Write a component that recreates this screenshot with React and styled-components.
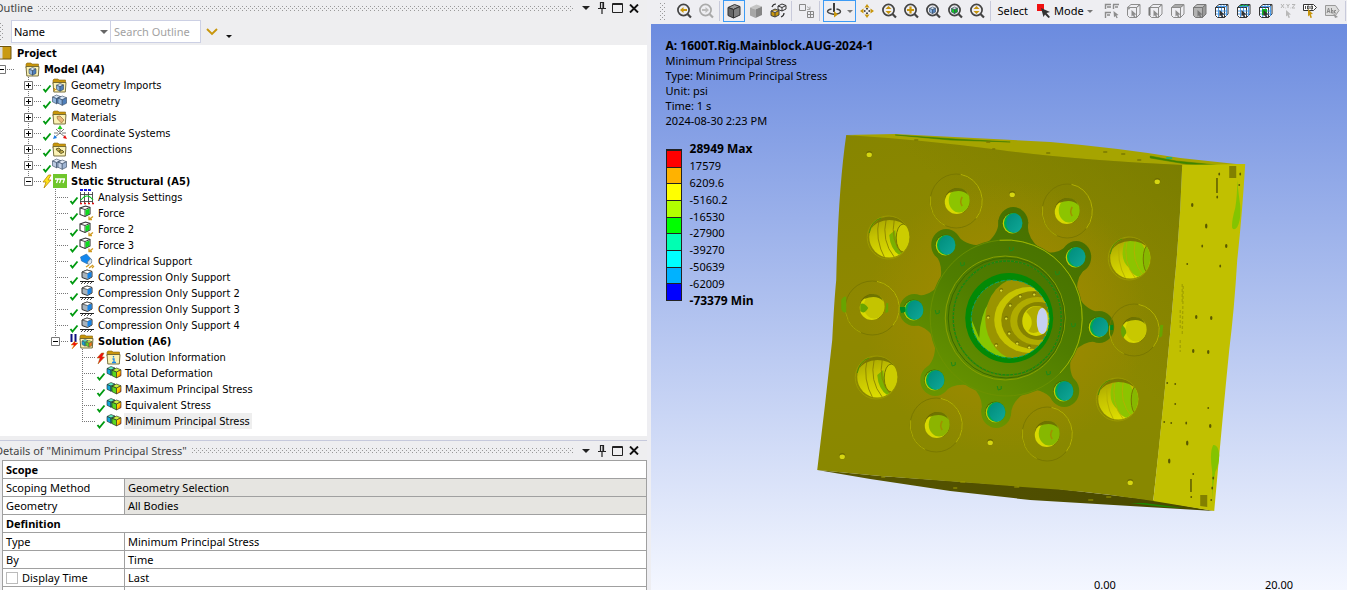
import React from "react";
import styled, { createGlobalStyle, css } from "styled-components";

const uiFont = '"Noto Sans", "Open Sans", sans-serif';
const treeFont = '"DejaVu Sans Condensed", "DejaVu Sans", sans-serif';

const GlobalStyle = createGlobalStyle`
  * { box-sizing: border-box; }
  body { margin: 0; background: #eeeef2; color: #000; font: 11px/16px ${uiFont}; overflow: hidden; }
  button, input, select { font: inherit; color: inherit; }
  svg { display: block; }
`;

const dotPattern = css`
  background-image:
    conic-gradient(from 270deg at 1px 1px, #999 90deg, transparent 0),
    conic-gradient(from 270deg at 1px 1px, #999 90deg, transparent 0);
  background-size: 4px 4px;
  background-position: 0 0, 2px 2px;
`;

const Workbench = styled.main`
  display: flex;
  height: 100vh;
`;

const SidePane = styled.div`
  flex: 0 0 48%;
  display: flex;
  flex-direction: column;
  min-width: 0;
  margin-right: 4px;
  overflow: hidden;
`;

const Panel = styled.section`
  display: flex;
  flex-direction: column;
  background: #eeeef0;
  ${(p) => p.$fill && "flex: 1 1 0; min-height: 0; overflow: hidden;"}
`;

const PanelHeader = styled.header`
  display: flex;
  flex: none;
  align-items: center;
  gap: 5px;
  height: ${(p) => (p.$ruled ? 20 : 16)}px;
  padding-right: 5px;
  border-top: ${(p) => (p.$ruled ? "1px solid #c6c9dc" : "0")};
`;

const PanelTitle = styled.h2`
  margin: 0 0 0 -5px;
  font-size: 11px;
  font-weight: 400;
  color: #444;
  white-space: nowrap;
`;

const DragArea = styled.div`
  flex: 1;
  height: 5px;
  ${dotPattern}
`;

const WindowButtons = styled.div`
  display: flex;
`;

const PlainButton = styled.button`
  display: grid;
  place-items: center;
  padding: 0;
  border: 0;
  background: none;
`;

const WindowButton = styled(PlainButton)`
  width: 16px;
  height: 16px;
`;

const FilterBar = styled.div`
  display: flex;
  align-items: center;
  height: 29px;
  padding: 2px 0 0;
`;

const Grip = styled.span`
  flex: none;
  width: ${(p) => p.$size}px;
  height: 17px;
  ${dotPattern}
`;

const SelectBox = styled.label`
  position: relative;
  margin-left: 7px;
`;

const FilterSelect = styled.select`
  appearance: none;
  display: block;
  width: 100px;
  height: 23px;
  padding: 0 2px;
  border: 1px solid #ccd0e4;
  background: #fff;
  outline: 0;
`;

const SelectArrow = styled.span`
  position: absolute;
  right: 3px;
  top: 10px;
  pointer-events: none;
`;

const SearchInput = styled.input`
  width: 90px;
  height: 23px;
  padding: 0 3px;
  border: 1px solid #ccd0e4;
  border-left: 0;
  background: #fff;
  outline: 0;
  &::placeholder { color: #a2a2a2; opacity: 1; }
`;

const ExpandButton = styled(PlainButton)`
  width: 22px;
  height: 20px;
`;

const OverflowButton = styled(PlainButton)`
  width: 12px;
  height: 12px;
  align-items: end;
`;

const Tree = styled.ul`
  margin: 0 0 4px;
  padding: 0 0 7px;
  list-style: none;
  background: #fff;
  font: 11px/18px ${treeFont};
`;

const TreeRow = styled.li`
  display: flex;
  height: 16px;
  margin-left: -12px;
  white-space: nowrap;
`;

const vDots = "repeating-linear-gradient(#777 0 1px, transparent 1px 2px)";
const hDots = "repeating-linear-gradient(90deg, #777 0 1px, transparent 1px 2px)";

const Guide = styled.span`
  flex: none;
  width: 27px;
  padding: 4px 0 0 9px;
  background-repeat: no-repeat;
  background-position: 13px 0, 13px 8px;
  background-image: ${vDots}, ${hDots};
  background-size: 1px ${(p) => ({ full: "16px", half: "8px" }[p.$down] || "0")}, ${(p) => (p.$across ? "14px 1px" : "0 0")};
`;

const Toggle = styled(PlainButton)`
  width: 9px;
  height: 9px;
  background: #fff;
`;

const Status = styled.span`
  flex: none;
  width: 10px;
`;

const NodeIcon = styled.span`
  flex: none;
  width: 16px;
`;

const NodeLabel = styled.span`
  height: 16px;
  margin-left: 2px;
  padding: 0 2px 0 1px;
  font-weight: ${(p) => (p.$bold ? 700 : 400)};
  background: ${(p) => (p.$selected ? "#eeeeee" : "none")};
`;

const DetailsTable = styled.table`
  width: calc(100% - 2px);
  margin-left: 2px;
  border-collapse: collapse;
  table-layout: fixed;
  background: #fff;
`;

const detailCell = css`
  height: 18px;
  padding: 0 3px;
  border: 1px solid #a0a0a0;
  line-height: 17px;
  text-align: left;
`;

const GroupCell = styled.th`
  ${detailCell}
  font-weight: 700;
`;

const NameCell = styled.th`
  ${detailCell}
  font-weight: 400;
`;

const ValueCell = styled.td`
  ${detailCell}
  background: ${(p) => (p.$muted ? "#e6e5e1" : "#fff")};
`;

const CheckLabel = styled.label`
  display: flex;
  align-items: center;
  gap: 4px;
`;

const CheckBox = styled.input`
  appearance: none;
  width: 12px;
  height: 12px;
  margin: 0;
  border: 1px solid #bbb;
  background: #fff;
`;

const MainPane = styled.div`
  flex: 1;
  min-width: 0;
  display: flex;
  flex-direction: column;
`;

const ToolBar = styled.div`
  display: flex;
  align-items: center;
  flex: none;
  height: 24px;
  padding: 0 0 2px 9px;
  overflow: hidden;
  white-space: nowrap;
`;

const ToolGroup = styled.div`
  display: flex;
  flex: none;
  margin-left: ${(p) => p.$gap || 0}px;
`;

const ToolFrame = styled.div`
  display: flex;
  flex: none;
  outline: ${(p) => (p.$active ? "1px solid #3d9bf5" : "0")};
  outline-offset: -1px;
`;

const ToolButton = styled(PlainButton)`
  flex: none;
  width: ${(p) => p.$width || 22}px;
  height: 22px;
`;

const Divider = styled.span`
  flex: none;
  width: 6px;
  height: 20px;
  background: linear-gradient(#c8cadb, #c8cadb) 2px 0 / 1px 100% no-repeat;
`;

const TextTool = styled(PlainButton)`
  display: flex;
  align-items: center;
  gap: 3px;
  height: 22px;
  margin-left: ${(p) => p.$gap}px;
`;

const Scene = styled.section`
  position: relative;
  flex: 1;
  min-height: 0;
  display: flex;
  flex-direction: column;
  padding: 14px 0 0 15px;
  overflow: hidden;
  background: linear-gradient(#6b8bdf, #f4f7ff);
`;

const ModelDrawing = styled.svg`
  position: absolute;
  inset: 0;
  width: 100%;
  height: 100%;
`;

const Caption = styled.div`
  position: relative;
  font-size: 11px;
  line-height: 15px;
`;

const CaptionLine = styled.p`
  margin: 0;
`;

const CaptionTitle = styled.h1`
  margin: 0;
  font-size: 12px;
  line-height: 15px;
`;

const Legend = styled.div`
  position: relative;
  display: flex;
  gap: 8px;
  height: 168px;
  margin-top: 13px;
`;

const ColorBar = styled.div`
  display: flex;
  flex-direction: column;
  width: 16px;
  margin: 8px 0;
  border: 1px solid #222;
  border-width: 2px 1px 1px;
`;

const Band = styled.span`
  flex: 1;
  background: ${(p) => p.$color};
  & + & { border-top: 1px solid #222; }
`;

const LegendLabels = styled.ol`
  display: flex;
  flex-direction: column;
  margin: 0;
  padding: 0;
  list-style: none;
`;

const LegendLabel = styled.li`
  flex: 1;
  display: flex;
  align-items: center;
  font-size: ${(p) => (p.$bold ? 12 : 11)}px;
  font-weight: ${(p) => (p.$bold ? 700 : 400)};
`;

const ScaleRow = styled.div`
  position: relative;
  display: flex;
  justify-content: flex-end;
  gap: 149px;
  margin-top: auto;
  padding-right: 54px;
  line-height: 11px;
`;

/* ---------- small glyphs ---------- */

const Caret = ({ w = 8, color = "#333" }) => (
  <svg width={w} height={w / 2} viewBox="0 0 8 4"><path d="M0 0h8L4 4z" fill={color} /></svg>
);

const Svg16 = ({ children }) => <svg width="16" height="16" viewBox="0 0 16 16">{children}</svg>;

const Folder = ({ children }) => (
  <Svg16>
    <path d="M1 3.500V3l1-1h4l1 1h6.500v4H1z" fill="#c8960c" stroke="#8a6a10" strokeWidth=".6" />
    <path d="M1 5.500h13L13.300 15H1.800z" fill="#fbf2b4" stroke="#6b6230" strokeWidth=".9" />
    {children}
  </Svg16>
);

const MiniCube = ({ x = 0, y = 0, s = 1, top = "#d5e4f5", left = "#8fb4de", right = "#4f80bc", line = "#33475f" }) => (
  <g transform={`translate(${x} ${y}) scale(${s})`} stroke={line} strokeWidth={0.6 / s} strokeLinejoin="round">
    <path d="M0 2.500L5 0l5 2-5 2.500z" fill={top} />
    <path d="M0 2.500l5 2V11L0 8.500z" fill={left} />
    <path d="M5 4.500L10 2v6.500L5 11z" fill={right} />
  </g>
);

const TwinCubes = ({ a, b }) => (
  <Svg16>
    <MiniCube x={0.5} y={2} s={0.8} {...a} />
    <MiniCube x={6} y={3} s={0.85} {...b} />
  </Svg16>
);

const ForceIcon = () => (
  <Svg16>
    <path d="M1 3L6.500 1 11 2.500V9L6 11.500 1 9.500z" fill="#fff" stroke="#333" strokeWidth="1.100" />
    <path d="M1 3l5 1.500L11 2.500M6 4.500v7" fill="none" stroke="#444" />
    <path d="M6.500 5L10.500 3.500v5.200l-4 2z" fill="#0bdc1c" />
    <path d="M14 11.500l-4 3m0-3v3h3" fill="none" stroke="#d09a20" strokeWidth="1.300" />
  </Svg16>
);

const SupportIcon = () => (
  <Svg16>
    <path d="M3 3l5-2 5 1.500V8l-4.500 2.500L3 8.500z" fill="#a9b3bc" stroke="#333" strokeWidth="1" />
    <path d="M3 3l5-2 5 1.500-4.500 2z" fill="#fff" stroke="#444" strokeWidth=".8" />
    <path d="M8.500 4.500L12.500 3v4.800l-4 2.200z" fill="#1583e8" />
    <path d="M1 12.500h14" stroke="#222" strokeWidth="1" />
    <path d="M2 15l2-2m1 2l2-2m1 2l2-2m1 2l2-2" stroke="#333" strokeWidth=".9" fill="none" />
  </Svg16>
);

const ResultIcon = () => (
  <Svg16>
    <defs>
      <linearGradient id="hot" x1="0" x2="1" y1="0" y2="1">
        <stop offset="0" stopColor="#e8ff00" /><stop offset=".5" stopColor="#ffc400" /><stop offset="1" stopColor="#f01808" />
      </linearGradient>
    </defs>
    <MiniCube x={1} y={1.500} s={0.8} top="#5ff0c0" left="#12a6d8" right="#28c878" line="#222" />
    <MiniCube x={6} y={3} s={0.9} top="#c8f040" left="#58d820" right="url(#hot)" line="#222" />
  </Svg16>
);

const ICONS = {
  project: (
    <Svg16><path d="M1 1.500h12v12.500H1z" fill="#c99a12" stroke="#6e5512" /><path d="M2 2h2.500v11.500H2z" fill="#ddd" /></Svg16>
  ),
  model: <Folder><MiniCube x={4} y={6.500} s={0.7} /></Folder>,
  imports: <Folder><MiniCube x={4.500} y={6.500} s={0.7} /><path d="M2.500 11v3m-1-1.500h3" stroke="#d09a20" /></Folder>,
  geometry: <TwinCubes />,
  materials: <Folder><path d="M5 7.500l3-.5 4 4-2.500 3-4-4z" fill="#e9b87c" stroke="#98703c" strokeWidth=".7" /></Folder>,
  coords: (
    <Svg16>
      <path d="M8 9V2M8 8l5 4M8 8l-5 4M4 4l3 3m2 0l3-3M2 8h4m4 0h4" stroke="#555" strokeWidth=".8" />
      <path d="M8 0l2.500 4h-5z" fill="#1bd01b" /><path d="M15 14l-4-1 2-3z" fill="#e81010" /><path d="M1 14l1.500-4 2.500 3z" fill="#1c7ee8" />
    </Svg16>
  ),
  connections: <Folder><path d="M4 8l3-1 2 2-3 1.500zM7 11l3-2 2 2-3 1.500z" fill="#c7b24c" stroke="#5d5520" strokeWidth=".9" /></Folder>,
  mesh: <TwinCubes a={{ top: "#e0e8f4", left: "#bccbe2", right: "#9fb5d4" }} b={{ top: "#e0e8f4", left: "#c4d2e8", right: "#9fb5d4" }} />,
  structural: (
    <Svg16>
      <path d="M1 1h14v14H1z" fill="#70c62c" />
      <path d="M3 6h10M6 6l-1.500 4M9 6l-1.500 4M12.500 6L11 10" stroke="#fff" strokeWidth="1.300" />
    </Svg16>
  ),
  settings: (
    <Svg16>
      <path d="M1.500 3v11M5.500 3v11M9.500 3v11M13.500 3v11M1 5.500h13M1 12.500h13" stroke="#444" strokeWidth=".9" />
      <path d="M2 11Q8 3 14 11" stroke="#00c818" strokeWidth="1.200" fill="none" />
      <path d="M1 1h3M5 1h3M9 1h3" stroke="#1818e0" strokeWidth="2" /><path d="M1 14.500h2M5 14.500h2M9 14.500h2M13 14.500h2" stroke="#e01010" strokeWidth="1.500" />
    </Svg16>
  ),
  force: <ForceIcon />,
  cylinder: (
    <Svg16>
      <path d="M1.500 4L7.500 1l5 5.500-4 4.500L2.500 8z" fill="#1387ee" stroke="#2a6aa8" strokeWidth=".6" />
      <path d="M11.500 5.500q2 2 1 4.500l-2.500 1.500q-2-.5-1.500-2.500z" fill="#d9e6f2" stroke="#567" strokeWidth=".6" />
      <path d="M7 14l3-2m0 3l4-3m-1 3l2-2" stroke="#d09a20" strokeWidth="1.200" />
    </Svg16>
  ),
  support: <SupportIcon />,
  solution: (
    <Folder>
      <MiniCube x={3} y={6.500} s={0.6} top="#5ff0c0" left="#12a6d8" right="#28c878" line="#456" />
      <MiniCube x={7} y={7.500} s={0.6} top="#c8f040" left="#68d820" right="#f07818" line="#564" />
    </Folder>
  ),
  info: <Folder><path d="M7.500 7v1.500M6.500 10h1.500v3M6 13.500h4" stroke="#1c86e8" strokeWidth="1.300" fill="none" /></Folder>,
  result: <ResultIcon />,
};

const STATUS = {
  ok: <path d="M1.500 12l2 2.500 5-6" stroke="#009a10" strokeWidth="1.900" fill="none" />,
  stale: <path d="M6.500 2L1 9h3l-2 6 7-8H6l3-5z" fill="#ffe21c" stroke="#b88a08" strokeWidth=".8" />,
  failed: <path d="M5.500 4L1 9h3l-2 6 6.500-7H6l2-4z" fill="#f01010" stroke="#a06a08" strokeWidth=".5" />,
  paused: (
    <g>
      <path d="M2.500 1v8M6.500 1v8" stroke="#101080" strokeWidth="2" />
      <path d="M6 8l-4 4h3l-2 4 6-6H6z" fill="#f01010" stroke="#d89a08" strokeWidth=".5" />
    </g>
  ),
};

/* ---------- outline data ---------- */

const NODES = [
  { label: "Project", icon: "project", depth: 0, bold: true },
  { label: "Model (A4)", icon: "model", depth: 1, bold: true, open: true, line: "none" },
  { label: "Geometry Imports", icon: "imports", depth: 2, status: "ok", open: false },
  { label: "Geometry", icon: "geometry", depth: 2, status: "ok", open: false },
  { label: "Materials", icon: "materials", depth: 2, status: "ok", open: false },
  { label: "Coordinate Systems", icon: "coords", depth: 2, status: "ok", open: false },
  { label: "Connections", icon: "connections", depth: 2, status: "ok", open: false },
  { label: "Mesh", icon: "mesh", depth: 2, status: "ok", open: false },
  { label: "Static Structural (A5)", icon: "structural", depth: 2, status: "stale", bold: true, open: true, line: "half" },
  { label: "Analysis Settings", icon: "settings", depth: 3, status: "ok" },
  { label: "Force", icon: "force", depth: 3, status: "ok" },
  { label: "Force 2", icon: "force", depth: 3, status: "ok" },
  { label: "Force 3", icon: "force", depth: 3, status: "ok" },
  { label: "Cylindrical Support", icon: "cylinder", depth: 3, status: "ok" },
  { label: "Compression Only Support", icon: "support", depth: 3, status: "ok" },
  { label: "Compression Only Support 2", icon: "support", depth: 3, status: "ok" },
  { label: "Compression Only Support 3", icon: "support", depth: 3, status: "ok" },
  { label: "Compression Only Support 4", icon: "support", depth: 3, status: "ok" },
  { label: "Solution (A6)", icon: "solution", depth: 3, status: "paused", bold: true, open: true, line: "half" },
  { label: "Solution Information", icon: "info", depth: 4, status: "failed" },
  { label: "Total Deformation", icon: "result", depth: 4, status: "ok" },
  { label: "Maximum Principal Stress", icon: "result", depth: 4, status: "ok" },
  { label: "Equivalent Stress", icon: "result", depth: 4, status: "ok" },
  { label: "Minimum Principal Stress", icon: "result", depth: 4, status: "ok", line: "half", selected: true },
];

function OutlineNode({ node }) {
  const parents = Math.max(node.depth - 1, 0);
  return (
    <TreeRow>
      {Array.from({ length: parents }, (_, i) => <Guide key={i} />)}
      {node.depth > 0 && (
        <Guide $down={node.line || "full"} $across>
          {node.open !== undefined && (
            <Toggle aria-label={`${node.open ? "Collapse" : "Expand"} ${node.label}`}>
              <svg width="9" height="9" viewBox="0 0 9 9">
                <path d="M.5.5h8v8h-8z" fill="#fff" stroke="#777" />
                <path d={node.open ? "M2 4.500h5" : "M2 4.500h5M4.500 2v5"} stroke="#000" />
              </svg>
            </Toggle>
          )}
        </Guide>
      )}
      <Status>{node.status && <svg width="10" height="16" viewBox="0 0 10 16">{STATUS[node.status]}</svg>}</Status>
      <NodeIcon>{ICONS[node.icon]}</NodeIcon>
      <NodeLabel $bold={node.bold} $selected={node.selected}>{node.label}</NodeLabel>
    </TreeRow>
  );
}

const PanelControls = () => (
  <WindowButtons>
    <WindowButton aria-label="Options"><Caret color="#222" /></WindowButton>
    <WindowButton aria-label="Pin">
      <svg width="10" height="12" viewBox="0 0 10 12"><path d="M3.500.5h3v6h-3zM6 1v5M1 6.500h8M5 7v5" fill="none" stroke="#222" strokeWidth="1.200" /></svg>
    </WindowButton>
    <WindowButton aria-label="Maximize">
      <svg width="12" height="10" viewBox="0 0 12 10"><path d="M.5.5h10v9H.5zM.5 1.500h10" fill="none" stroke="#222" strokeWidth="1" /></svg>
    </WindowButton>
    <WindowButton aria-label="Close">
      <svg width="10" height="9" viewBox="0 0 10 9"><path d="M1 .5l8 8M9 .5l-8 8" stroke="#111" strokeWidth="1.900" /></svg>
    </WindowButton>
  </WindowButtons>
);

/* ---------- toolbar ---------- */

const Svg22 = ({ children }) => <svg width="22" height="22" viewBox="0 0 22 22" fill="none">{children}</svg>;

const Lens = ({ color = "#444", children }) => (
  <Svg22>
    <circle cx="10.500" cy="10" r="5.600" stroke={color} strokeWidth="1.700" />
    <path d="M14.500 14l3.500 3.500" stroke={color} strokeWidth="2.200" />
    {children}
  </Svg22>
);

const UpDown = () => <path d="M10.500 6l3 3h-6zM10.500 14l3-3h-6z" fill="#c8960c" />;

const BigCube = ({ top, left, right, line }) => (
  <Svg22>
    <path d="M5 7.500L11.500 4.500 17 6.500 10.500 9.500z" fill={top} stroke={line} />
    <path d="M5 7.500l5.500 2V18L5 15.500z" fill={left} stroke={line} />
    <path d="M10.500 9.500L17 6.500V15l-6.500 3z" fill={right} stroke={line} />
  </Svg22>
);

const WireCube = ({ line = "#8c8c8c", front = "none", top = "none", side = "none", children }) => (
  <Svg22>
    <path d="M4.500 7.500h9v10h-7l-2-2z" fill={front} stroke={line} />
    <path d="M4.500 7.500L8 4.500h9l-3.500 3z" fill={top} stroke={line} />
    <path d="M13.500 7.500l3.500-3V14l-3.500 3.500z" fill={side} stroke={line} />
    {children}
    <path d="M8.500 10l5 4.500-2.200.2 1.200 2.300-1.500.6-1-2.300-1.500 1.300z" fill={line} />
  </Svg22>
);

const MeshLines = () => (
  <path d="M7.500 8v9M10.500 8v9M5 11h11.500M5 14h11.500M6 6.500h9M11 4.500L8 7.500M14 4.500l-3 3M15.500 6v10" stroke="#3f96ea" strokeWidth=".9" />
);

const LEFT_TOOLS = {
  back: <Lens><path d="M7 10l3.500-3v2H14v2h-3.500v2z" fill="#c8960c" /></Lens>,
  forward: <Lens color="#aaa"><path d="M14 10l-3.500-3v2H7v2h3.500v2z" fill="#bbb" /></Lens>,
  shadedEdges: <BigCube top="#999" left="#666" right="#808080" line="#333" />,
  shaded: <BigCube top="#c4c4c4" left="#a6a6a6" right="#858585" line="none" />,
  wireframe: (
    <Svg22>
      <path d="M11 6l4-2 4 1.500V9l-4 2-4-1.500zM11 6l4 1.500L19 5.500M15 7.500V11" stroke="#333" />
      <path d="M4 11l4-2 4 1.500V15l-4 2-4-1.500zM4 11l4 1.500 4-2M8 12.500V17" fill="#c8960c" stroke="#444" />
      <path d="M5 7q1-3 4-3M17 13q0 3-3 4" stroke="#333" strokeWidth="1.200" />
    </Svg22>
  ),
  explode: (
    <Svg22>
      <path d="M4.500 4.500h6v6h-6zM12.500 11.500h6v6h-6zM15.500 12v5.500M13 14.500h5.500" stroke="#888" />
      <path d="M12 6.500l3 2.500m0-2.500v3h-3" stroke="#aaa" />
    </Svg22>
  ),
  rotate: (
    <Svg22>
      <path d="M11 3v9" stroke="#333" strokeWidth="1.900" />
      <path d="M8.500 9q-4 .8-4 2.500t6 2.800q7-.3 7-2.800 0-1.700-4-2.500" stroke="#444" strokeWidth="1.400" />
      <path d="M11 11l4 3.500-4 3z" fill="#c8960c" />
    </Svg22>
  ),
  pan: (
    <Svg22>
      <path d="M11 4l2.500 3.500h-5zM11 18l2.500-3.500h-5zM4 11l3.500-2.500v5zM18 11l-3.500-2.500v5z" fill="#c8960c" />
      <path d="M11 8v1.500M11 12.500V14M8 11h1.500M12.500 11H14" stroke="#222" strokeWidth="1.600" />
    </Svg22>
  ),
  zoom: <Lens><UpDown /></Lens>,
  zoomIn: <Lens><path d="M10.500 6.500v7M7 10h7" stroke="#c8960c" strokeWidth="2.200" /></Lens>,
  zoomFit: <Lens><MiniCube x={7.500} y={7} s={0.6} /></Lens>,
  zoomPick: <Lens><MiniCube x={7.500} y={7} s={0.6} top="#ddd" left="#14c828" right="#12a822" /></Lens>,
  zoomBox: <Lens><UpDown /></Lens>,
};

const RIGHT_TOOLS = [
  ["Selection filters", <Svg22><path d="M4.500 9V4.500H10M12 4.500h6M12.500 4.500V9M6 7h4M14 7h3M4.500 18v-5.500H10M6 15h3" stroke="#8c8c8c" strokeWidth="1.400" /><path d="M12.500 11l5 4-2 .4 1.300 2.300-1.300.5-1-2.300-1.500 1.300z" fill="#8c8c8c" /></Svg22>],
  ["Vertex", <WireCube><circle cx="5.500" cy="8" r="1.600" fill="#999" /></WireCube>],
  ["Edge", <WireCube><path d="M4.500 7.500v8" stroke="#777" strokeWidth="2" /></WireCube>],
  ["Face", <WireCube top="#aaa" />],
  ["Body", <WireCube top="#bdbdbd" front="#b2b2b2" side="#9a9a9a" line="#777" />],
  ["Node", <WireCube line="#333" front="#fff" top="#fff" side="#fff"><MeshLines /></WireCube>],
  ["Element face", <WireCube line="#333" front="#fff" top="#10b020" side="#fff"><MeshLines /></WireCube>],
  ["Element", <WireCube line="#333" front="#fff" top="#fff" side="#fff"><MeshLines /><path d="M7 9h5v6H7z" fill="#10b020" /></WireCube>],
  ["Coordinates", <Svg22><path d="M4 4l3 4m0-4L4 8M9.500 4l1.500 2 1.500-2M11 6v2M15 4.500h3L15 8h3M8.500 8h.6M13.500 8h.6" stroke="#b4b4b4" /><path d="M9 10l5 4.500-2.200.2 1.200 2.800-1.500.6-1-2.800L9 16.500z" fill="#b8b8b8" /></Svg22>],
  ["Probe", <Svg22><path d="M4.500 4.500h10l3 3-3 3h-10z" fill="#fff" stroke="#333" /><path d="M6.500 6v3M8.500 6H10v3H8.500zM12 6h1.500v3H12z" stroke="#222" strokeWidth=".8" /><path d="M9 9l5 5-2.200.2 1.200 3.300-1.600.6-1-3-1.400 1.400z" fill="#c8960c" /></Svg22>],
  ["Annotation", <Svg22><path d="M4.500 5.500h10l3.500 5-3.500 5h-10z" fill="#ddd" stroke="#999" /><path d="M6 13l1.500-5L9 13M6.500 11.500h2M10.500 8v5h1.500v-2.500h-1.500M15 10.500h-1.500V13H15" stroke="#888" /><path d="M12 13l5 4-3 1z" fill="#999" /></Svg22>],
];

const Tool = ({ name, label }) => <ToolButton aria-label={label}>{LEFT_TOOLS[name]}</ToolButton>;

function GraphicsToolbar() {
  return (
    <ToolBar>
      <Grip $size={6} />
      <ToolGroup $gap={7}><Tool name="back" label="Previous view" /><Tool name="forward" label="Next view" /></ToolGroup>
      <Divider />
      <ToolGroup>
        <ToolFrame $active><Tool name="shadedEdges" label="Shaded with edges" /></ToolFrame>
        <Tool name="shaded" label="Shaded" />
        <Tool name="wireframe" label="Wireframe" />
      </ToolGroup>
      <Divider />
      <Tool name="explode" label="Explode" />
      <Divider />
      <ToolFrame $active>
        <Tool name="rotate" label="Rotate" />
        <ToolButton $width={11} aria-label="Rotate options"><Caret w={6} color="#777" /></ToolButton>
      </ToolFrame>
      <ToolGroup>
        <Tool name="pan" label="Pan" />
        <Tool name="zoom" label="Zoom" />
        <Tool name="zoomIn" label="Zoom in" />
        <Tool name="zoomFit" label="Zoom to fit" />
        <Tool name="zoomPick" label="Zoom to selection" />
        <Tool name="zoomBox" label="Box zoom" />
      </ToolGroup>
      <Divider />
      <TextTool $gap={4}>Select</TextTool>
      <TextTool $gap={9}>
        <svg width="14" height="14" viewBox="0 0 14 14"><path d="M0 0h7v7H0z" fill="#f01010" /><path d="M4 4l9 4-3.500 1L13 13l-1.500 1L8 10.500 6.500 13z" fill="#333" /></svg>
        Mode
        <Caret w={6} color="#777" />
      </TextTool>
      <ToolGroup $gap={8}>
        {RIGHT_TOOLS.map(([label, icon]) => <ToolButton key={label} aria-label={label}>{icon}</ToolButton>)}
      </ToolGroup>
      <Divider />
    </ToolBar>
  );
}

/* ---------- stress model ---------- */

const BOLTS = [[1013, 223], [1076, 257], [1099, 327], [1064, 391], [996, 412], [935, 380], [914, 310], [946, 245]];
const PORTS = [
  [957, 201, 956, 201, 26, 27, "#8cc400"], [1067, 211, 1067, 211, 25, 27, "#8cc400"],
  [872, 307, 872, 308, 27, 27, "#c4c400"], [1134, 330, 1134, 330, 25, 26, "#c8c800"],
  [937, 425, 936, 425, 26, 27, "#8cb400"], [1047, 434, 1047, 434, 25, 27, "#86b800"],
];
const BORES = [[888, 237, 0], [1129, 258, 1], [876, 377, 0], [1117, 399, 1]];
const PINS = [[869, 154], [1012, 194], [1157, 181], [842, 456], [990, 442], [1130, 482]];
const SIDE_HOLES = [
  [1192, 205, 4], [1206, 226, 5], [1202, 246, 3], [1226, 246, 4], [1187, 264, 2], [1220, 266, 3], [1196, 317, 4], [1211, 318, 4],
  [1193, 351, 4], [1208, 352, 4], [1167, 383, 2], [1175, 384, 2], [1175, 404, 2], [1208, 408, 2], [1164, 422, 2], [1171, 423, 2],
  [1186, 423, 3], [1210, 426, 4], [1187, 443, 5], [1169, 461, 5], [1193, 474, 2], [1191, 497, 2], [1219, 174, 3], [1217, 197, 3],
  [1240, 174, 3], [1239, 185, 2], [1213, 478, 3], [1212, 488, 3], [1211, 500, 2],
];
const FLANGE_PINS = [[1011, 249], [962, 264], [1057, 273], [937, 312], [1073, 325], [953, 364], [1048, 373], [999, 388]];
const INNER_PINS = [[1001, 290], [1020, 296], [1034, 294], [988, 317], [1006, 318], [1010, 305], [1009, 333], [1017, 343], [1029, 347], [996, 345]];

function ellipseArc(cx, cy, rx, ry, fromDeg, toDeg) {
  const at = (deg) => {
    const a = (deg * Math.PI) / 180;
    return `${(cx + rx * Math.cos(a)).toFixed(1)} ${(cy + ry * Math.sin(a)).toFixed(1)}`;
  };
  return `M${at(fromDeg)}A${rx} ${ry} 0 0 1 ${at(toDeg)}`;
}

function Bore({ x, y, mirrored }) {
  const id = `bore${x}`;
  return (
    <g>
      <clipPath id={id}><ellipse cx={x + 1} cy={y} rx="20" ry="20.500" /></clipPath>
      <ellipse cx={x} cy={y + 0.5} rx="21" ry="21.500" fill="none" stroke="#9c9a00" />
      <g clipPath={`url(#${id})`}>
        <path d={`M${x - 22} ${y - 22}h44v44h-44z`} fill="url(#boreFill)" />
        {mirrored ? (
          <path d={`M${x - 5} ${y - 15}q10-6 16-2l8 14v20l-10 2q-7-3-9-9-10-8-5-25z`} fill="#8cc400" />
        ) : (
          <path d={`M${x + 1} ${y - 2}l6-5q0 12 8 22l-4 3q-9-6-10-20z`} fill="#7ab000" />
        )}
        <path d={`M${x - 9} ${y - 18}q-5 20 6 40M${x - 2} ${y - 18}q-5 22 8 38M${x + 6} ${y - 17}q-4 20 8 34`} fill="none" stroke={mirrored ? "#b4b000" : "#8a8200"} strokeWidth=".9" />
        <ellipse cx={x + (mirrored ? 19 : 15)} cy={y + 1} rx={mirrored ? 5 : 7} ry="14" fill={mirrored ? "#86b800" : "#cccc00"} stroke="#777800" />
        <path d={`M${x - 20} ${y - 5}q2-16 21-17 15 0 19 13-7-8-19-8-13 0-21 12z`} fill="#7a7800" />
      </g>
      <path d={`M${x - 19} ${y - 4}q2-12 12-15`} fill="none" stroke="#4f9000" strokeWidth="1" />
    </g>
  );
}

function StressModel() {
  return (
    <ModelDrawing viewBox="651 24 696 566" role="img" aria-label="Minimum principal stress contour on the main block">
      <defs>
        <linearGradient id="face" x1="0" y1="0" x2=".2" y2="1">
          <stop offset="0" stopColor="#868500" /><stop offset=".5" stopColor="#8f8800" /><stop offset="1" stopColor="#888800" />
        </linearGradient>
        <radialGradient id="warm"><stop offset=".55" stopColor="#a08a00" /><stop offset="1" stopColor="#a08a00" stopOpacity="0" /></radialGradient>
        <linearGradient id="shade" x1="0" x2="1" y1="1" y2="0"><stop offset=".6" stopColor="#707800" stopOpacity="0" /><stop offset="1" stopColor="#6c7600" stopOpacity=".6" /></linearGradient>
        <linearGradient id="flange" gradientUnits="userSpaceOnUse" x1="1070" y1="235" x2="960" y2="400">
          <stop offset="0" stopColor="#467000" /><stop offset=".5" stopColor="#4f7d00" /><stop offset="1" stopColor="#689400" />
        </linearGradient>
        <linearGradient id="boreFill" x1="0" x2=".3" y1="0" y2="1"><stop offset="0" stopColor="#9c9a00" /><stop offset=".5" stopColor="#c4c200" /><stop offset="1" stopColor="#dcdc00" /></linearGradient>
        <linearGradient id="bolt" x1="0" x2="1" y1="0" y2="1"><stop offset="0" stopColor="#008c7c" /><stop offset="1" stopColor="#10a898" /></linearGradient>
        <linearGradient id="under" x1="0" x2="1"><stop offset="0" stopColor="#585600" /><stop offset="1" stopColor="#484800" /></linearGradient>
        <clipPath id="throat"><ellipse cx="1010" cy="319" rx="39" ry="39" /></clipPath>
      </defs>

      <path d="M846 135l49-1 155 8q70 6 130 16l65 7-63 2-136-10-150-16z" fill="#a6a400" />
      <path d="M895 135l60 4 55 3-60-2zM1150 156l26 5 50 5-40-2-36-6z" fill="#3f8600" stroke="#3a7c00" strokeWidth=".5" />
      <path d="M1166 158h6" stroke="#00b090" strokeWidth="1.500" />
      <path d="M817 470l63 6 170 12 103 12 61 11-84-5-100-6-80-9-80-12z" fill="url(#under)" />
      <path d="M1130 503h14l40 5-20-1z" fill="#1f8800" />
      <path d="M846 135q80 5 154 15t182 15q-2 60-8 120-9 110-21 216-60-9-103-12l-170-13-63-6q8-65 15-130 2-40 4-60 2-90 10-145z" fill="url(#face)" />
      <path d="M846 135q80 5 154 15t182 15q-2 60-8 120-9 110-21 216-60-9-103-12l-170-13-63-6q8-65 15-130 2-40 4-60 2-90 10-145z" fill="url(#shade)" />
      <ellipse cx="1006" cy="318" rx="142" ry="138" fill="url(#warm)" opacity=".6" />
      <path d="M1182 165l63-1q-3 50-8 96-3 50-8 90-6 60-15 161l-61-10q15-140 21-216 6-60 8-120z" fill="#c1c000" />
      <path d="M1229 166h7v12h-7zM1200 495h7v12l-7-1z" fill="#828000" />
      <path d="M1216 178h1.500v15H1216zM1190 479h1.500v13H1190z" fill="#5c5a00" />
      <path d="M1237 180q2 20 3 25 1 15-3 22-3 4-5 1-1-6 3-20 2-12 2-28zM1213 445q5-1 6 10 0 10-4 17-3 16-3 34 0-20 0-34-3-20 1-27z" fill="#84c400" />
      {SIDE_HOLES.map(([x, y, h], i) => <ellipse key={i} cx={x} cy={y} rx={h > 3 ? 1.2 : 0.9} ry={h / 2} fill="#5a5800" />)}
      <path d="M1182 284v18m-2 8v20m3-44l-1 50m-2 4v12" stroke="#a3a200" strokeWidth="1.300" strokeDasharray="3 2" />

      <g fill="url(#flange)">
        {BOLTS.map(([x, y], i) => {
          const dx = x - 1007, dy = y - 318, len = Math.hypot(dx, dy);
          const ux = dx / len, uy = dy / len;
          const p = (along, side) => `${(x - ux * along - uy * side).toFixed(1)} ${(y - uy * along + ux * side).toFixed(1)}`;
          return (
            <path key={i} d={`M${p(-2, 15)}Q${p(12, 13)} ${p(24, 28)}L${p(60, 0)}L${p(24, -28)}Q${p(12, -13)} ${p(-2, -15)}z`} />
          );
        })}
        {BOLTS.map(([x, y], i) => <ellipse key={i} cx={x} cy={y} rx="15" ry="16" />)}
        <ellipse cx="1006" cy="318" rx="77" ry="79" />
      </g>
      <ellipse cx="1006" cy="318" rx="76" ry="78" fill="none" stroke="#6f9200" strokeWidth=".8" />
      <path d={ellipseArc(1006, 318, 76, 78, -95, 45)} fill="none" stroke="#9cb400" strokeWidth="1" />
      <ellipse cx="1005" cy="318" rx="60" ry="62" fill="none" stroke="#88a000" strokeWidth="1" />
      <ellipse cx="1006" cy="318" rx="58" ry="60" fill="none" stroke="#3b6800" strokeWidth="1" />
      <ellipse cx="1007" cy="318" rx="54" ry="57" fill="none" stroke="#178a10" strokeWidth="1.300" />
      <ellipse cx="1007" cy="318" rx="54" ry="57" fill="none" stroke="#a05a10" strokeWidth="1" strokeDasharray="1 3" />
      <ellipse cx="1009" cy="318" rx="44" ry="45" fill="#038a06" />
      <g clipPath="url(#throat)">
        <ellipse cx="1010" cy="319" rx="39" ry="39" fill="#88c600" />
        <path d="M971 319q2-36 40-39l14 3q-44 4-46 55z" fill="#4d8400" />
        <ellipse cx="1022" cy="319" rx="37" ry="42" fill="#9a9400" />
        <ellipse cx="1029" cy="320" rx="35" ry="33" fill="#c6c400" />
        <ellipse cx="1034" cy="320" rx="33" ry="29" fill="#8f8a00" />
        <ellipse cx="1037" cy="321" rx="27" ry="24" fill="#b0ac00" />
        <ellipse cx="1038" cy="321" rx="21" ry="19" fill="#858200" />
        <ellipse cx="1036" cy="321" rx="14" ry="15" fill="#d4d400" />
        <path d="M1026 312q6-8 16-5l-3 24q-6 4-11 0 8-10-2-19z" fill="#b0ac00" />
        {INNER_PINS.map(([x, y], i) => <g key={i}><circle cx={x} cy={y} r="1.900" fill="#747200" /><circle cx={x} cy={y + 0.6} r="1.200" fill="#dcdc30" /></g>)}
        <ellipse cx="1042" cy="321" rx="5.500" ry="13" fill="#c5d0f2" />
      </g>
      <ellipse cx="1010" cy="319" rx="39" ry="39" fill="none" stroke="#0a9c6c" strokeWidth="1" strokeDasharray="4 2" />
      {FLANGE_PINS.map(([x, y], i) => <path key={i} d={`M${x - 2} ${y - 2}l1 4 3-1v-3`} fill="none" stroke="#1f8a18" strokeWidth="1" />)}

      {BOLTS.map(([x, y], i) => (
        <g key={i}>
          <ellipse cx={x - 1} cy={y} rx="10" ry="10.500" fill="#4a6800" />
          <ellipse cx={x - 1} cy={y + 0.5} rx="9.500" ry="10" fill="#c0d000" />
          <ellipse cx={x} cy={y} rx="9.300" ry="10" fill="#00a850" />
          <ellipse cx={x + 1} cy={y} rx="8" ry="9.500" fill="url(#bolt)" />
        </g>
      ))}
      <path d="M899 307h6v5l-4 1zM1108 325h5v5h-4z" fill="#008a20" />

      {PORTS.map(([x, y, cx, cy, rx, ry, fill], i) => (
        <g key={i}>
          <ellipse cx={cx} cy={cy} rx={rx} ry={ry} fill="none" stroke="#757300" strokeWidth=".8" />
          <path d={ellipseArc(cx, cy, rx, ry, -80, 40)} fill="none" stroke="#b4b200" strokeWidth="1" />
          <path d={ellipseArc(cx, cy, rx, ry, 115, 190)} fill="none" stroke="#a8a600" strokeWidth="1" />
          <ellipse cx={x} cy={y} rx="12.500" ry="13" fill="#6a6800" />
          <ellipse cx={x - 0.5} cy={y + 1} rx="12" ry="12" fill="#d8d800" />
          <ellipse cx={x + 2} cy={y - 0.5} rx="10.500" ry="12" fill={fill} />
          <path d={`M${x - 8} ${y - 8}q3-5 9-5 7 0 10 7-7-7-19-2z`} fill="#6f7400" />
          {i !== 2 && i !== 3 && <path d={`M${x + 5} ${y - 4}q-3 5 0 9`} fill="none" stroke="#a09000" strokeWidth="1.500" />}
        </g>
      ))}
      <path d="M841 300q3-5 5-3v15q-3 2-5-3zM886 303h2v9l-3 1zM1160 325h3l-1 11-3 2zM860 304q4-2 8 4-4 7-8 3zM1122 325q4 3 4 8l-3 5q-4-5-1-13z" fill="#68a400" />

      {BORES.map(([x, y, m]) => <Bore key={x} x={x} y={y} mirrored={!!m} />)}
      {PINS.map(([x, y], i) => (
        <g key={i}><circle cx={x} cy={y} r="3" fill="#6e6c00" /><ellipse cx={x} cy={y + 0.7} rx="2.700" ry="2.300" fill="#d6d610" /></g>
      ))}
      <path d="M914 140h4M986 142h4M992 149h3M1046 153h4M1103 152h4M1121 154h4M1137 160h4" stroke="#7a7800" strokeWidth="1.300" />
      <path d="M881 477h4M960 482h5M953 488h4M1014 487h5M1088 500h5M1106 497h5" stroke="#a09e00" strokeWidth="1.200" />
    </ModelDrawing>
  );
}

const LEGEND = [
  ["28949 Max", "#ff0000"], ["17579", "#ffb200"], ["6209.6", "#ffff00"], ["-5160.2", "#b2ff00"], ["-16530", "#00ff00"],
  ["-27900", "#00ffb2"], ["-39270", "#00ffff"], ["-50639", "#00b2ff"], ["-62009", "#0000ff"], ["-73379 Min", null],
];

export default function App() {
  return (
    <>
      <GlobalStyle />
      <Workbench>
        <SidePane>
          <Panel>
            <PanelHeader>
              <PanelTitle>Outline</PanelTitle>
              <DragArea />
              <PanelControls />
            </PanelHeader>
            <FilterBar>
              <Grip $size={4} />
              <SelectBox>
                <FilterSelect aria-label="Filter by" defaultValue="Name"><option>Name</option></FilterSelect>
                <SelectArrow><Caret color="#666" /></SelectArrow>
              </SelectBox>
              <SearchInput placeholder="Search Outline" aria-label="Search Outline" />
              <ExpandButton aria-label="Expand search">
                <svg width="12" height="8" viewBox="0 0 12 8"><path d="M1 1l5 5 5-5" fill="none" stroke="#c8960c" strokeWidth="1.900" /></svg>
              </ExpandButton>
              <OverflowButton aria-label="Toolbar options"><Caret w={6} color="#111" /></OverflowButton>
            </FilterBar>
            <Tree>{NODES.map((n) => <OutlineNode key={n.label} node={n} />)}</Tree>
          </Panel>
          <Panel $fill>
            <PanelHeader $ruled>
              <PanelTitle>Details of "Minimum Principal Stress"</PanelTitle>
              <DragArea />
              <PanelControls />
            </PanelHeader>
            <DetailsTable>
              <colgroup><col style={{ width: 122 }} /><col /></colgroup>
              <tbody>
                <tr><GroupCell colSpan={2}>Scope</GroupCell></tr>
                <tr><NameCell>Scoping Method</NameCell><ValueCell $muted>Geometry Selection</ValueCell></tr>
                <tr><NameCell>Geometry</NameCell><ValueCell $muted>All Bodies</ValueCell></tr>
                <tr><GroupCell colSpan={2}>Definition</GroupCell></tr>
                <tr><NameCell>Type</NameCell><ValueCell>Minimum Principal Stress</ValueCell></tr>
                <tr><NameCell>By</NameCell><ValueCell>Time</ValueCell></tr>
                <tr>
                  <NameCell><CheckLabel><CheckBox type="checkbox" />Display Time</CheckLabel></NameCell>
                  <ValueCell>Last</ValueCell>
                </tr>
                <tr><NameCell /><ValueCell /></tr>
              </tbody>
            </DetailsTable>
          </Panel>
        </SidePane>
        <MainPane>
          <GraphicsToolbar />
          <Scene>
            <StressModel />
            <Caption>
              <CaptionTitle>A: 1600T.Rig.Mainblock.AUG-2024-1</CaptionTitle>
              <CaptionLine>Minimum Principal Stress</CaptionLine>
              <CaptionLine>Type: Minimum Principal Stress</CaptionLine>
              <CaptionLine>Unit: psi</CaptionLine>
              <CaptionLine>Time: 1 s</CaptionLine>
              <CaptionLine>2024-08-30 2:23 PM</CaptionLine>
            </Caption>
            <Legend>
              <ColorBar>{LEGEND.slice(0, 9).map(([, c]) => <Band key={c} $color={c} />)}</ColorBar>
              <LegendLabels>
                {LEGEND.map(([text], i) => <LegendLabel key={text} $bold={i === 0 || i === 9}>{text}</LegendLabel>)}
              </LegendLabels>
            </Legend>
            <ScaleRow><span>0.00</span><span>20.00</span></ScaleRow>
          </Scene>
        </MainPane>
      </Workbench>
    </>
  );
}
